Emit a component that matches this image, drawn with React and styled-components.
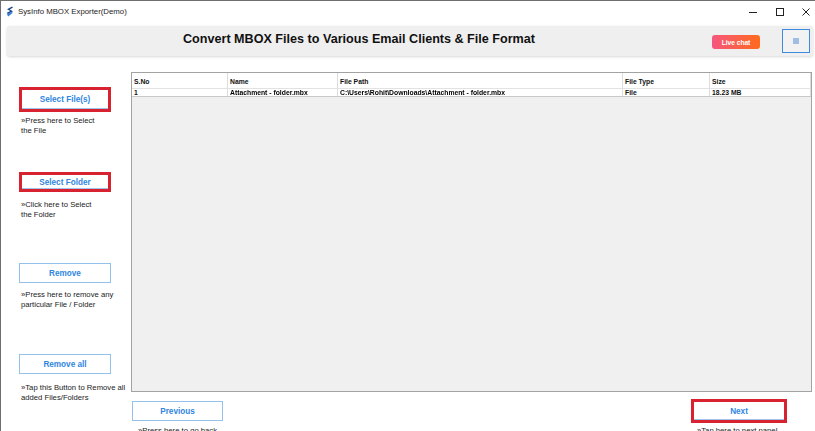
import { createGlobalStyle, styled } from "styled-components";

const Global = createGlobalStyle`
  html, body { margin: 0; padding: 0; background: #fff; }
  body { font-family: "Liberation Sans", Arial, sans-serif; }
  * { box-sizing: border-box; }
`;

const Window = styled.div`
  height: 431px;
  width: 815px;
  overflow: hidden;
  display: flex;
  flex-direction: column;
  border-top: 1px solid #6e6e6e;
  border-left: 1px solid #6e6e6e;
  background: #fff;
`;

const TitleBar = styled.div`
  height: 21px;
  display: flex;
  align-items: center;
  padding-left: 4px;
  font-size: 7.8px;
  color: #1c1c1c;
`;

const AppName = styled.span`
  margin-left: 4px;
`;

const WinControls = styled.div`
  margin-left: auto;
  display: flex;
  align-items: center;
  gap: 16.5px;
  padding-right: 4px;
  height: 100%;
`;

const WinBtn = styled.div`
  width: 10px;
  height: 100%;
  display: flex;
  align-items: center;
  justify-content: center;
`;

const HeaderBar = styled.div`
  margin: 4px 2px 0 6px;
  height: 30px;
  background: #efefef;
  border-radius: 3px;
  box-shadow: 0 1px 3px rgba(0, 0, 0, 0.16);
  display: flex;
  align-items: center;
  padding-left: 176px;
  padding-right: 3px;
`;

const Heading = styled.h1`
  margin: 0 0 4px 0;
  font-size: 12.6px;
  font-weight: 700;
  color: #111;
`;

const LiveChat = styled.button`
  margin-left: auto;
  margin-top: 2px;
  width: 48px;
  height: 14px;
  border: none;
  border-radius: 3px;
  background: linear-gradient(90deg, #f5567e 0%, #ff6a1c 100%);
  color: #fff;
  font-family: inherit;
  font-weight: 700;
  font-size: 6.6px;
  padding: 0;
`;

const MenuBtn = styled.button`
  margin-left: 22px;
  width: 28px;
  height: 24px;
  border: 1px solid #3d8be0;
  background: #f2f2f2;
  display: flex;
  align-items: center;
  justify-content: center;
  padding: 0;
`;

const Body = styled.div`
  flex: 1;
  display: flex;
  min-height: 0;
`;

const Sidebar = styled.div`
  width: 130px;
  flex-shrink: 0;
  display: flex;
  flex-direction: column;
  padding-left: 18px;
`;

const Group = styled.div`
  display: flex;
  flex-direction: column;
  margin-top: ${(p) => p.$top}px;
`;

const ActionBtn = styled.button`
  width: ${(p) => p.$w || 92}px;
  height: ${(p) => p.$h || 20}px;
  background: #fff;
  border: ${(p) => (p.$hot ? "3px solid #d8222f" : "1px solid #94c0ec")};
  box-shadow: ${(p) => (p.$hot ? "inset 0 -1px 0 #9fc3ea" : "none")};
  color: #2f86df;
  font-family: inherit;
  font-weight: 700;
  font-size: 8.2px;
  padding: 0;
  cursor: pointer;
`;

const Help = styled.div`
  margin-top: ${(p) => p.$gap}px;
  margin-left: 2px;
  font-size: 7.7px;
  line-height: 9.5px;
  color: #1a1a1a;
`;

const Main = styled.div`
  flex: 1;
  display: flex;
  flex-direction: column;
  padding-top: 16px;
  padding-right: 3px;
`;

const Grid = styled.div`
  flex: 1;
  border: 1px solid #a3a3a3;
  background: #f0f0f0;
`;

const Row = styled.div`
  display: grid;
  grid-template-columns: 96px 110px 285px 87px 1fr;
  background: #fff;
  height: ${(p) => p.$h}px;
  border-bottom: 1px solid ${(p) => (p.$head ? "#e2e2e2" : "#c9c9c9")};
`;

const Cell = styled.div`
  display: flex;
  align-items: ${(p) => (p.$head ? "flex-end" : "center")};
  padding: ${(p) => (p.$head ? "0 0 3px 2px" : "0 0 0 2px")};
  border-right: 1px solid #dcdcdc;
  font-size: 6.8px;
  font-weight: 700;
  color: #111;
  white-space: nowrap;
  overflow: hidden;
`;

const Masked = styled.span`
  display: inline-block;
  filter: blur(0.55px);
  text-decoration: underline;
  color: #000;
`;

const Footer = styled.div`
  height: 39px;
  display: flex;
  justify-content: space-between;
  align-items: flex-start;
  padding: 7px 25px 0 1px;
`;

const FootGroup = styled.div`
  display: flex;
  flex-direction: column;
  margin-top: ${(p) => p.$top || 0}px;
`;

const FootHelp = styled.div`
  margin: ${(p) => p.$gap}px 0 0 6px;
  font-size: 7.7px;
  color: #1a1a1a;
`;

const Logo = () => (
  <svg width="9" height="11" viewBox="0 0 9 11">
    <path d="M7 0.5 L2 3.2 L5.2 5 L1.5 7 L3 8 L8 5.2 L4.8 3.5 L8 1.6 Z" fill="#1f4a8c" />
    <path d="M2 8.4 L6.5 6 L7.8 6.8 L3.2 10.5 Z" fill="#2d7fd6" />
  </svg>
);

const Minimize = () => (
  <svg width="10" height="10" viewBox="0 0 10 10">
    <line x1="1" y1="5.5" x2="9" y2="5.5" stroke="#222" strokeWidth="1" />
  </svg>
);

const Maximize = () => (
  <svg width="10" height="10" viewBox="0 0 10 10">
    <rect x="1.5" y="1.5" width="7" height="7" fill="none" stroke="#222" strokeWidth="1" />
  </svg>
);

const Close = () => (
  <svg width="10" height="10" viewBox="0 0 10 10">
    <path d="M1.5 1.5 L8.5 8.5 M8.5 1.5 L1.5 8.5" stroke="#222" strokeWidth="1" />
  </svg>
);

const Burger = () => (
  <svg width="8" height="8" viewBox="0 0 8 8">
    <path d="M1 2 H7 M1 4 H7 M1 6 H7" stroke="#4f8ad6" strokeWidth="1" />
  </svg>
);

const sideItems = [
  { label: "Select File(s)", hot: true, h: 25, top: 31, gap: 4, help: ["»Press here to Select", "the File"] },
  { label: "Select Folder", hot: true, h: 20, top: 37, gap: 8, help: ["»Click here to Select", "the Folder"] },
  { label: "Remove", h: 20, top: 44, gap: 7, help: ["»Press here to remove any", "particular File / Folder"] },
  { label: "Remove all", h: 20, top: 45, gap: 9, help: ["»Tap this Button to Remove all", "added Files/Folders"] },
];

const columns = ["S.No", "Name", "File Path", "File Type", "Size"];

const files = [
  {
    no: "1",
    name: "Attachment - folder.mbx",
    path: "C:\\Users\\Rohit\\Downloads\\Attachment - folder.mbx",
    type: "File",
    size: "18.23 MB",
  },
];

export default function App() {
  return (
    <>
      <Global />
      <Window>
        <TitleBar>
          <Logo />
          <AppName>SysInfo MBOX Exporter(Demo)</AppName>
          <WinControls>
            <WinBtn><Minimize /></WinBtn>
            <WinBtn><Maximize /></WinBtn>
            <WinBtn><Close /></WinBtn>
          </WinControls>
        </TitleBar>

        <HeaderBar>
          <Heading>Convert MBOX Files to Various Email Clients &amp; File Format</Heading>
          <LiveChat>Live chat</LiveChat>
          <MenuBtn><Burger /></MenuBtn>
        </HeaderBar>

        <Body>
          <Sidebar>
            {sideItems.map((it) => (
              <Group key={it.label} $top={it.top}>
                <ActionBtn $hot={it.hot} $h={it.h}>{it.label}</ActionBtn>
                <Help $gap={it.gap}>
                  {it.help[0]}
                  <br />
                  {it.help[1]}
                </Help>
              </Group>
            ))}
          </Sidebar>

          <Main>
            <Grid>
              <Row $head $h={16}>
                {columns.map((c) => (
                  <Cell $head key={c}>{c}</Cell>
                ))}
              </Row>
              {files.map((f) => (
                <Row key={f.no} $h={8}>
                  <Cell>{f.no}</Cell>
                  <Cell><Masked>{f.name}</Masked></Cell>
                  <Cell><Masked>{f.path}</Masked></Cell>
                  <Cell>{f.type}</Cell>
                  <Cell>{f.size}</Cell>
                </Row>
              ))}
            </Grid>
            <Footer>
              <FootGroup $top={2}>
                <ActionBtn $w={91}>Previous</ActionBtn>
                <FootHelp $gap={5}>»Press here to go back</FootHelp>
              </FootGroup>
              <FootGroup>
                <ActionBtn $hot $w={96} $h={24}>Next</ActionBtn>
                <FootHelp $gap={3}>»Tap here to next panel</FootHelp>
              </FootGroup>
            </Footer>
          </Main>
        </Body>
      </Window>
    </>
  );
}
